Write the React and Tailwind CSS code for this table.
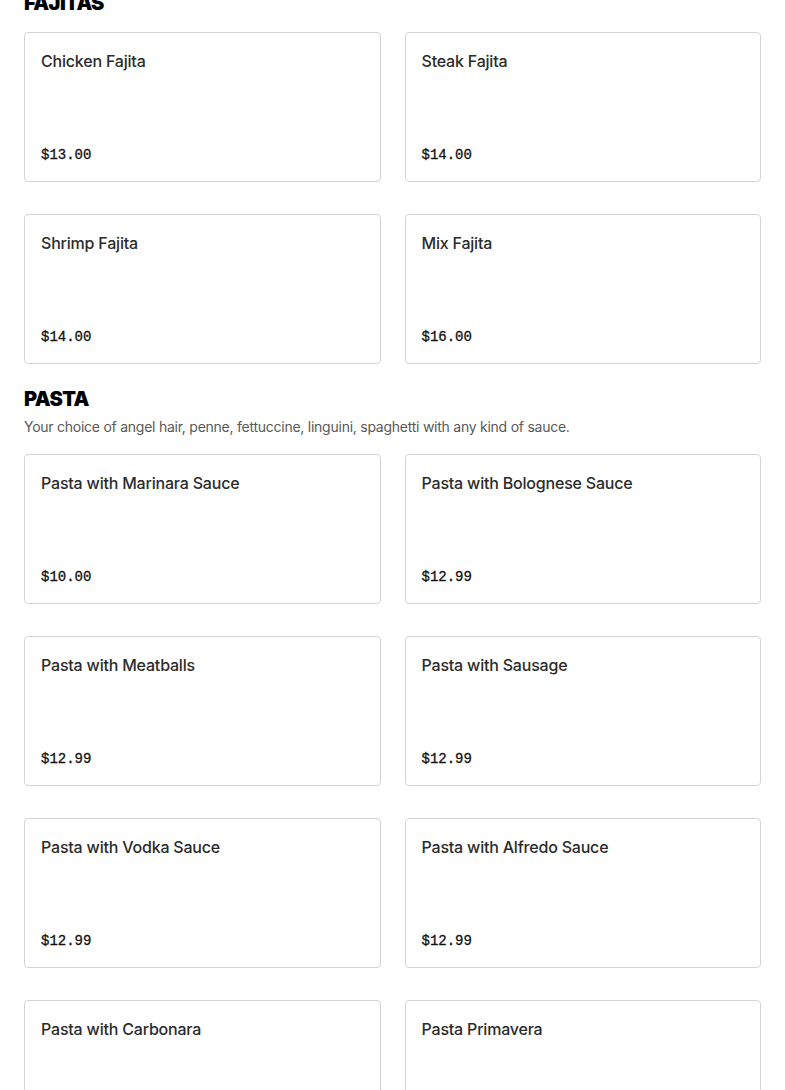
const SECTIONS = [
  {
    name: 'FAJITAS',
    items: [
      { name: 'Chicken Fajita', price: '$13.00' },
      { name: 'Steak Fajita', price: '$14.00' },
      { name: 'Shrimp Fajita', price: '$14.00' },
      { name: 'Mix Fajita', price: '$16.00' },
    ],
  },
  {
    name: 'PASTA',
    desc: 'Your choice of angel hair, penne, fettuccine, linguini, spaghetti with any kind of sauce.',
    items: [
      { name: 'Pasta with Marinara Sauce', price: '$10.00' },
      { name: 'Pasta with Bolognese Sauce', price: '$12.99' },
      { name: 'Pasta with Meatballs', price: '$12.99' },
      { name: 'Pasta with Sausage', price: '$12.99' },
      { name: 'Pasta with Vodka Sauce', price: '$12.99' },
      { name: 'Pasta with Alfredo Sauce', price: '$12.99' },
      { name: 'Pasta with Carbonara', price: '$12.99' },
      { name: 'Pasta Primavera', price: '$12.99' },
    ],
  },
];

function ItemCard({ item }) {
  return (
    <div className="h-[150px] flex flex-col justify-between p-4 border border-[#d4d4d4] rounded-[4px] bg-white">
      <p className="text-[16px] leading-6 font-medium tracking-[-0.2px] text-[#2b2b2b]">{item.name}</p>
      <p className="text-[14px] leading-5 font-normal text-[#111] font-['Liberation_Mono',monospace] [-webkit-text-stroke:0.3px_#111]">
        {item.price}
      </p>
    </div>
  );
}

export default function App() {
  return (
    <div className="bg-white min-h-screen px-6 font-['Inter',sans-serif] overflow-hidden">
      <div className="-mt-[9px]">
        {SECTIONS.map((s, i) => (
          <section key={s.name} className={i > 0 ? 'mt-[23px]' : ''}>
            <h2 className={`text-[20px] leading-6 font-black tracking-[-0.6px] text-black ${s.desc ? 'mb-[6px]' : 'mb-[17px]'}`}>
              {s.name}
            </h2>
            {s.desc && <p className="text-[14px] leading-5 tracking-[-0.25px] text-[#595959] mb-[17px]">{s.desc}</p>}
            <div className="grid grid-cols-2 gap-x-6 gap-y-8">
              {s.items.map((it) => <ItemCard key={it.name} item={it} />)}
            </div>
          </section>
        ))}
      </div>
    </div>
  );
}
